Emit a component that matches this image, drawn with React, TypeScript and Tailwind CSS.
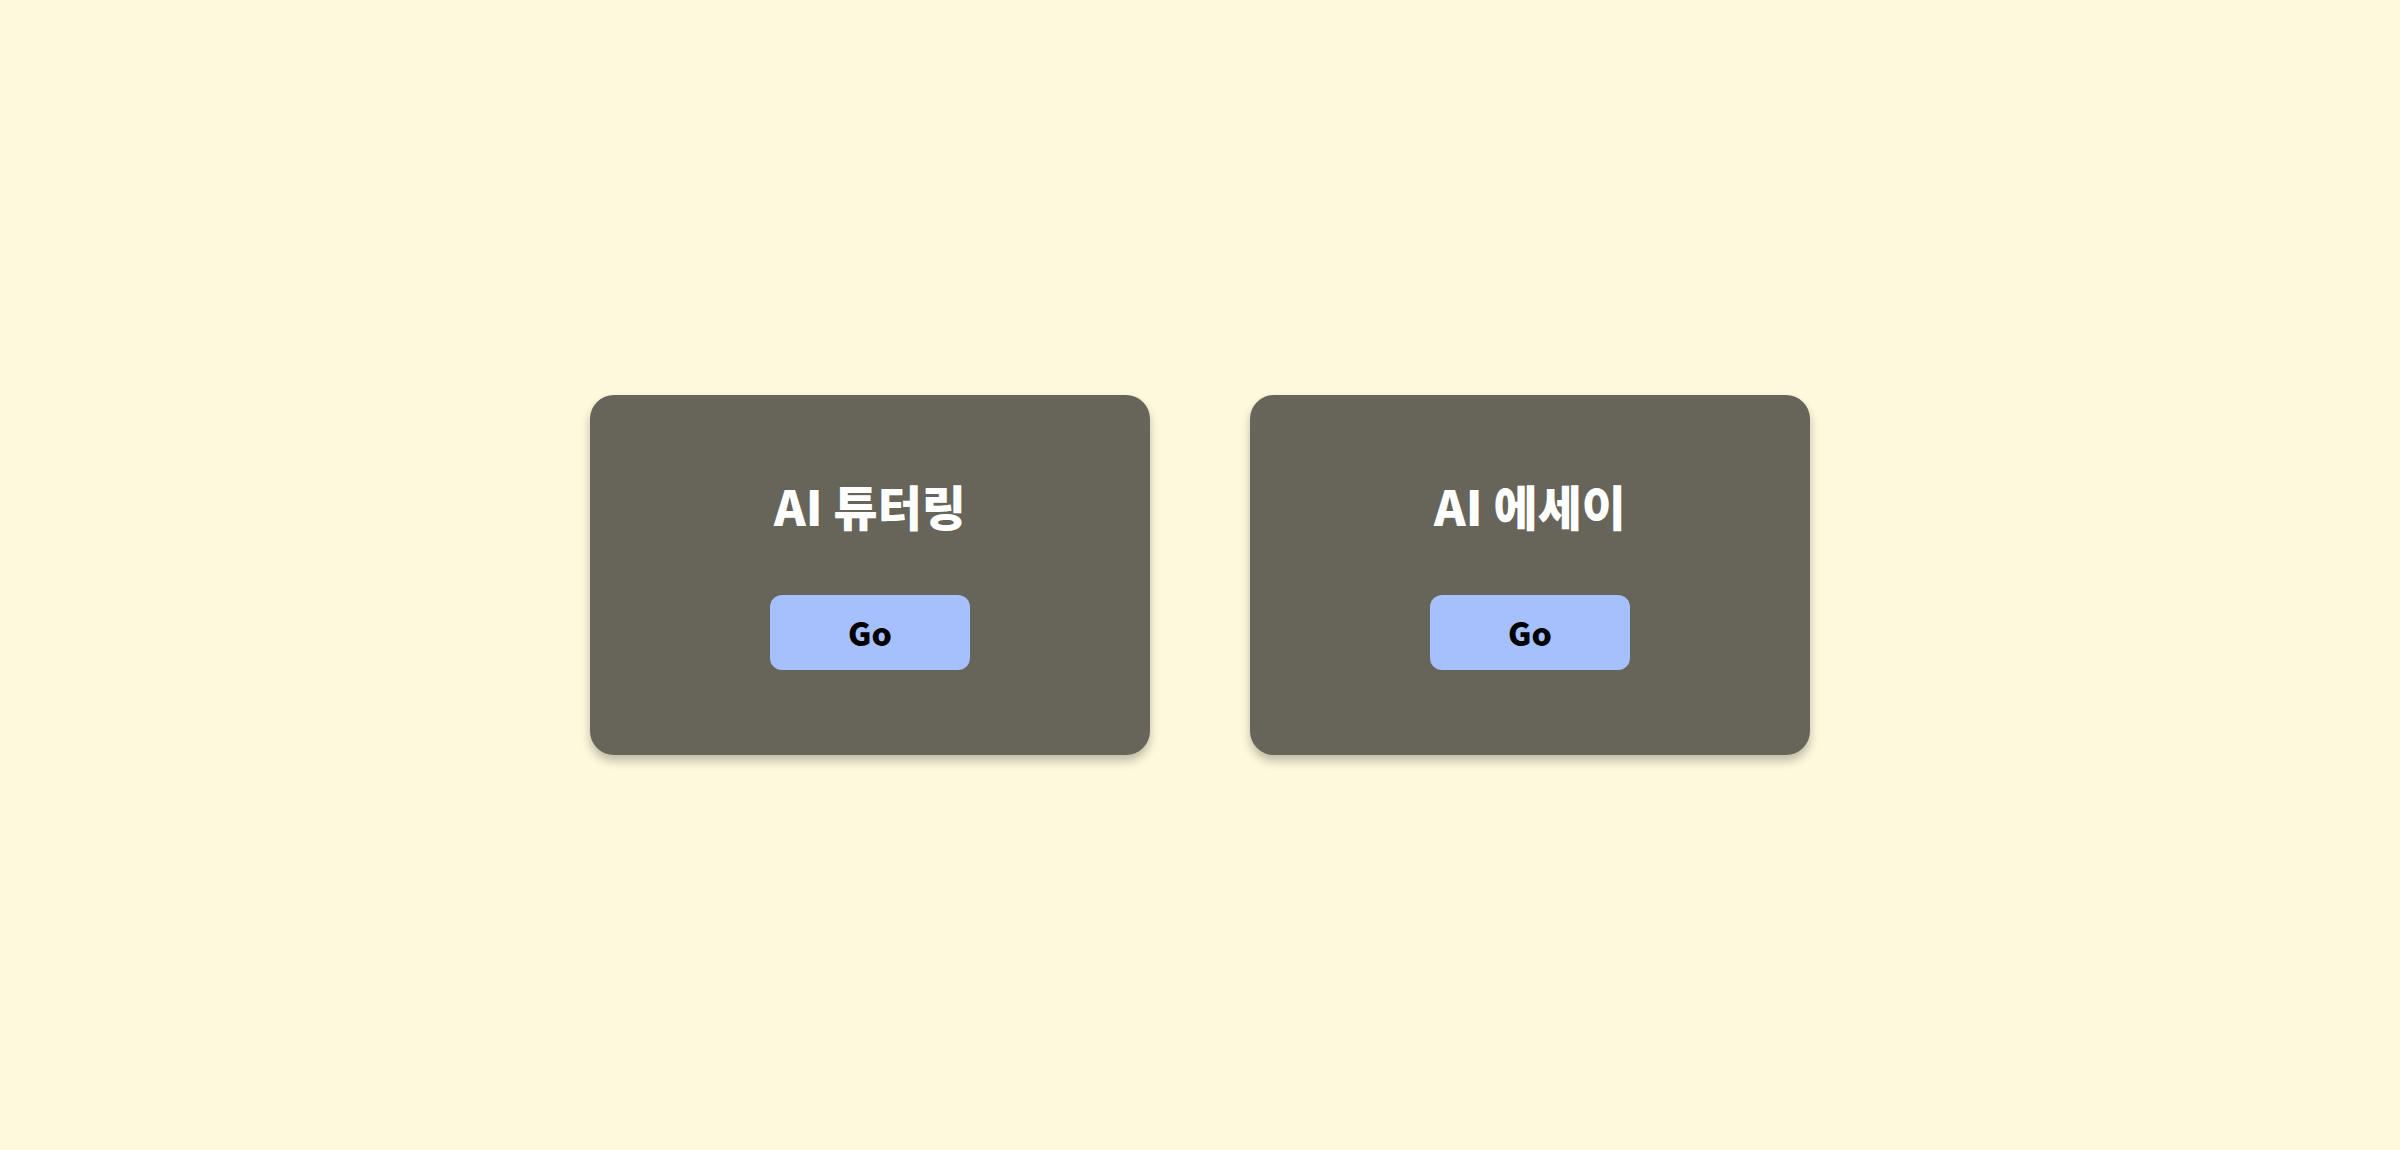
const CARDS = [
    { key: 'tutoring', title: 'AI 튜터링' },
    { key: 'essay', title: 'AI 에세이' }
] as const;

function MenuCard({ title }: { title: string }) {
    return (
        <div className="flex h-[360px] w-[560px] flex-col items-center justify-center gap-[66px] rounded-3xl bg-[#67645a] shadow-[0_6px_10px_rgba(0,0,0,0.25)]">
            <h2 className="text-[48px] font-black leading-none text-white">{title}</h2>
            <button
                type="button"
                className="flex h-[75px] w-[200px] items-center justify-center rounded-xl bg-[#a6c0fe] text-[32px] font-black text-black"
            >
                Go
            </button>
        </div>
    );
}

export default function App() {
    return (
        <div
            className="flex h-[1150px] w-full items-center justify-center gap-[100px] bg-[#fef9dd]"
            style={{ fontFamily: '"Noto Sans CJK KR", "Noto Sans", sans-serif' }}
        >
            {CARDS.map((card) => (
                <MenuCard key={card.key} title={card.title} />
            ))}
        </div>
    );
}
